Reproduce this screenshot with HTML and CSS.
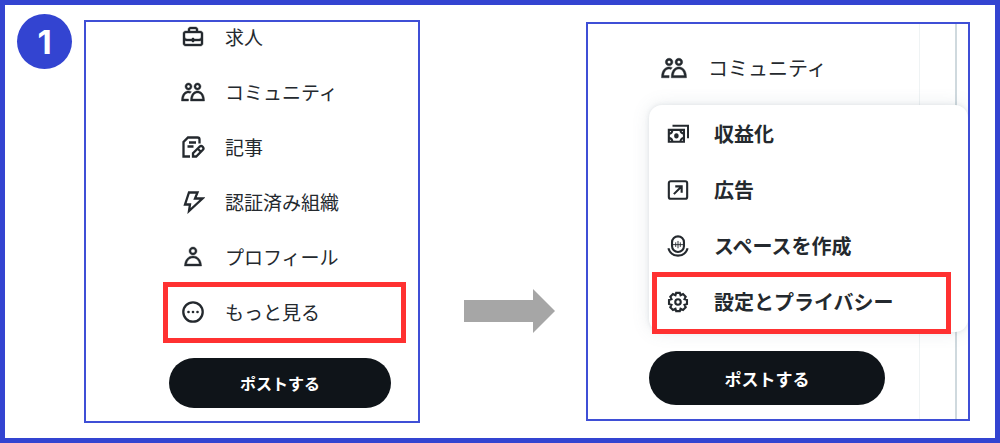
FILE: index.html
```html
<!DOCTYPE html>
<html lang="ja">
<head>
  <meta charset="UTF-8">
  <meta name="viewport" content="width=device-width, initial-scale=1.0">
  <title>設定とプライバシーの開き方</title>
  <link rel="stylesheet" href="styles.css">
</head>
<body>
  <svg class="sprite" aria-hidden="true">
    <symbol id="icon-community" viewBox="0 0 24 24">
      <path fill="currentColor" d="M7.501 19.917L7.471 21H.472l.029-1.027c.184-6.618 3.736-8.977 7-8.977.963 0 1.95.212 2.87.672-.444.478-.851 1.03-1.212 1.656-.507-.204-1.054-.329-1.658-.329-2.767 0-4.57 2.223-4.938 6.004H7.56c-.023.302-.05.599-.059.918zm15.998.056L23.528 21H9.472l.029-1.027c.184-6.618 3.736-8.977 7-8.977s6.816 2.358 7 8.977zM21.437 19c-.367-3.781-2.17-6.004-4.938-6.004s-4.57 2.223-4.938 6.004h9.875zm-4.938-9c-.799 0-1.527-.279-2.116-.73-.836-.64-1.384-1.638-1.384-2.77 0-1.93 1.567-3.5 3.5-3.5s3.5 1.57 3.5 3.5c0 1.132-.548 2.13-1.384 2.77-.589.451-1.317.73-2.116.73zm-1.5-3.5c0 .827.673 1.5 1.5 1.5s1.5-.673 1.5-1.5-.673-1.5-1.5-1.5-1.5.673-1.5 1.5zM7.501 3C9.434 3 11 4.57 11 6.5S9.434 10 7.501 10 4 8.43 4 6.5 5.567 3 7.501 3zm0 2C6.673 5 6 5.673 6 6.5S6.673 8 7.501 8 9 7.327 9 6.5 8.328 5 7.501 5z"/>
    </symbol>
  </svg>

  <main class="guide">
    <div class="step">1</div>

    <section class="panel panel-sidebar">
      <nav>
        <ul class="nav-list">
          <li><a class="nav-item" href="#">
            <svg class="icon solid" viewBox="0 0 24 24"><path fill="currentColor" d="M19.5 6H17V4.5C17 3.12 15.88 2 14.5 2h-5C8.12 2 7 3.12 7 4.5V6H4.5C3.12 6 2 7.12 2 8.5v10C2 19.88 3.12 21 4.5 21h15c1.38 0 2.5-1.12 2.5-2.5v-10C22 7.12 20.88 6 19.5 6zM9 4.5c0-.28.23-.5.5-.5h5c.28 0 .5.22.5.5V6H9V4.5zm11 14c0 .28-.22.5-.5.5h-15c-.27 0-.5-.22-.5-.5v-3.04c.59.35 1.27.54 2 .54h5v1h2v-1h5c.73 0 1.41-.19 2-.54v3.04zm0-6.49c0 1.1-.9 1.99-2 1.99h-5v-1h-2v1H6c-1.1 0-2-.9-2-2V8.5c0-.28.23-.5.5-.5h15c.28 0 .5.22.5.5v3.51z"/></svg>
            求人</a></li>
          <li><a class="nav-item" href="#">
            <svg class="icon solid"><use href="#icon-community"/></svg>
            コミュニティ</a></li>
          <li><a class="nav-item" href="#">
            <svg class="icon line" viewBox="0 0 24 24"><path d="M9 21.500H2.500V7L7 2.500h9.500a2 2 0 0 1 2 2v4M8 7.500h7M6.500 11.500h6"/><path d="M12 21.500v-3.200l6.500-6.500a2.100 2.100 0 0 1 3.200 3.200l-6.500 6.500zM16.800 13.800l3 3"/></svg>
            記事</a></li>
          <li><a class="nav-item" href="#">
            <svg class="icon line" viewBox="0 0 24 24"><path d="M8 2.500h8.500l-2.500 6h7.500L8 21l1-6.500H4z"/></svg>
            認証済み組織</a></li>
          <li><a class="nav-item" href="#">
            <svg class="icon solid" viewBox="0 0 24 24"><path fill="currentColor" d="M5.651 19h12.698c-.337-1.8-1.023-3.21-1.945-4.19C15.318 13.65 13.838 13 12 13s-3.317.65-4.404 1.81c-.922.98-1.608 2.39-1.945 4.19zm.486-5.56C7.627 11.85 9.648 11 12 11s4.373.85 5.863 2.44c1.477 1.58 2.366 3.8 2.632 6.46l.11 1.1H3.395l.11-1.1c.266-2.66 1.155-4.88 2.632-6.46zM12 4c-1.105 0-2 .9-2 2s.895 2 2 2 2-.9 2-2-.895-2-2-2zM8 6c0-2.21 1.791-4 4-4s4 1.79 4 4-1.791 4-4 4-4-1.79-4-4z"/></svg>
            プロフィール</a></li>
          <li><a class="nav-item highlight" href="#">
            <svg class="icon line" viewBox="0 0 24 24"><circle cx="12" cy="12" r="9.700"/><g fill="currentColor" stroke="none"><circle cx="7.500" cy="12" r="1.300"/><circle cx="12" cy="12" r="1.300"/><circle cx="16.500" cy="12" r="1.300"/></g></svg>
            もっと見る</a></li>
        </ul>
      </nav>
      <button class="post-btn" type="button">ポストする</button>
    </section>

    <svg class="arrow" viewBox="0 0 91 44" aria-hidden="true"><path d="M0 11h69V0l22 22-22 22V33H0z"/></svg>

    <section class="panel panel-menu">
      <a class="nav-item" href="#">
        <svg class="icon solid"><use href="#icon-community"/></svg>
        コミュニティ</a>
      <ul class="menu">
        <li><a class="menu-item" href="#">
          <svg class="icon line" viewBox="0 0 24 24"><path d="M2 7.500h16.500v13H2zM6 3h17v13.500"/><path d="M2 11.500c2.500 0 3.800-1.500 3.800-4M18.500 11.500c-2.500 0-3.800-1.500-3.800-4M2 16.500c2.500 0 3.800 1.500 3.800 4M18.500 16.500c-2.500 0-3.800 1.500-3.800 4"/><ellipse cx="10.250" cy="14" rx="1.300" ry="1.800" fill="currentColor"/></svg>
          収益化</a></li>
        <li><a class="menu-item" href="#">
          <svg class="icon line" viewBox="0 0 24 24"><rect x="2" y="2.500" width="20" height="19" rx="2"/><path d="M7.500 16.500l8-8M9 8h7v7"/></svg>
          広告</a></li>
        <li><a class="menu-item" href="#">
          <svg class="icon line" viewBox="0 0 24 24"><rect x="5.500" y="1.500" width="13" height="17" rx="6.500"/><path d="M1.500 14.500c1.500 5 5.500 8 10.500 8s9-3 10.500-8"/><path class="thin" d="M6.500 10.500h11M9.500 8v5M12 6.500v8M14.500 8v5"/></svg>
          スペースを作成</a></li>
        <li><a class="menu-item highlight" href="#">
          <svg class="icon line" viewBox="0 0 24 24"><path d="M10 2h4l.8 2.600 2.700-1.300 2.900 2.900-1.300 2.700 2.700.9v4.300l-2.700.9 1.300 2.700-2.900 2.900-2.700-1.300L14 22h-4l-.8-2.700-2.700 1.300-2.900-2.900 1.300-2.700-2.700-.9V9.800l2.700-.9-1.300-2.700 2.900-2.900 2.700 1.300z"/><circle cx="12" cy="12" r="3"/></svg>
          設定とプライバシー</a></li>
      </ul>
      <button class="post-btn" type="button">ポストする</button>
    </section>
  </main>
</body>
</html>
```
FILE: styles.css
```css
* {
  box-sizing: border-box;
}
body {
  margin: 0;
  background-color: #ffffff;
  color: #24292e;
  font-family: "Noto Sans CJK JP", sans-serif;
}
ul {
  margin: 0;
  padding: 0;
  list-style: none;
}
.sprite {
  display: none;
}
.guide {
  display: grid;
  grid-template-columns: 55px 7fr 142px 8fr;
  column-gap: 12px;
  align-items: center;
  min-height: 100vh;
  padding: 0 25px 0 12px;
  border: 5px solid #3344d1;
}
.step {
  display: flex;
  align-items: center;
  justify-content: center;
  align-self: start;
  height: 55px;
  margin-top: 9px;
  border-radius: 50%;
  background-color: #3344d1;
  color: #ffffff;
  font-family: Inter, sans-serif;
  font-size: 33px;
  font-weight: 700;
}
.panel {
  overflow: hidden;
  border: 2px solid #3f4fd6;
}
.panel-sidebar {
  padding: 0 12px 13px 77px;
}
/* the list is scrolled a little, so its first row starts above the panel */
.nav-list {
  margin-top: -13px;
}
.nav-item,
.menu-item {
  position: relative;
  display: flex;
  align-items: center;
  height: 55px;
  padding-left: 18px;
  gap: 20px;
  color: inherit;
  font-size: 19px;
  line-height: 28px;
  text-decoration: none;
}
.icon {
  flex: none;
  width: 24px;
  height: 24px;
}
.solid {
  stroke: currentColor;
  stroke-width: 0.4;
}
.line {
  fill: none;
  stroke: currentColor;
  stroke-width: 2.3;
}
.thin {
  stroke-width: 1;
}
.highlight::after {
  content: "";
  position: absolute;
  inset: -2px 0 -4px;
  border: 5px solid #ff3131;
}
.post-btn {
  display: block;
  border: none;
  border-radius: 27px;
  background-color: #0f1419;
  color: #ffffff;
  font-family: inherit;
  font-weight: 700;
  cursor: pointer;
}
.panel-sidebar .post-btn {
  width: calc(100% - 21px);
  height: 50px;
  margin: 19px 15px 0 6px;
  font-size: 16px;
}
.arrow {
  width: 91px;
  margin-top: 178px;
  margin-left: 12px;
  justify-self: center;
  fill: #a6a6a6;
}
/* column borders of the timeline behind the menu */
.panel-menu {
  padding: 16px 0 14px 61px;
  background-image: linear-gradient(#eff3f4, #eff3f4), linear-gradient(#cfd9de, #cfd9de);
  background-position: right 48px top, right 11px top;
  background-repeat: no-repeat;
  background-size: 1px 100%, 2px 100%;
}
.panel-menu .nav-item {
  padding-left: 12px;
  gap: 21px;
  font-size: 20px;
}
.panel-menu .nav-item .icon {
  width: 26px;
  height: 26px;
}
.menu {
  margin-top: 10px;
  padding: 1px 0 2px;
  border-radius: 13px;
  background-color: #ffffff;
  box-shadow: 0 0 17px rgba(101, 119, 134, 0.15), 0 0 4px rgba(101, 119, 134, 0.15);
}
.menu-item {
  height: 56px;
  margin: 0 17px 0 3px;
  padding-left: 15px;
  gap: 25px;
  font-size: 20px;
  font-weight: 700;
}
.menu-item .icon {
  width: 22px;
  height: 22px;
}
.panel-menu .post-btn {
  width: calc(100% - 83px);
  height: 54px;
  margin-top: 19px;
  font-size: 17px;
}
```
